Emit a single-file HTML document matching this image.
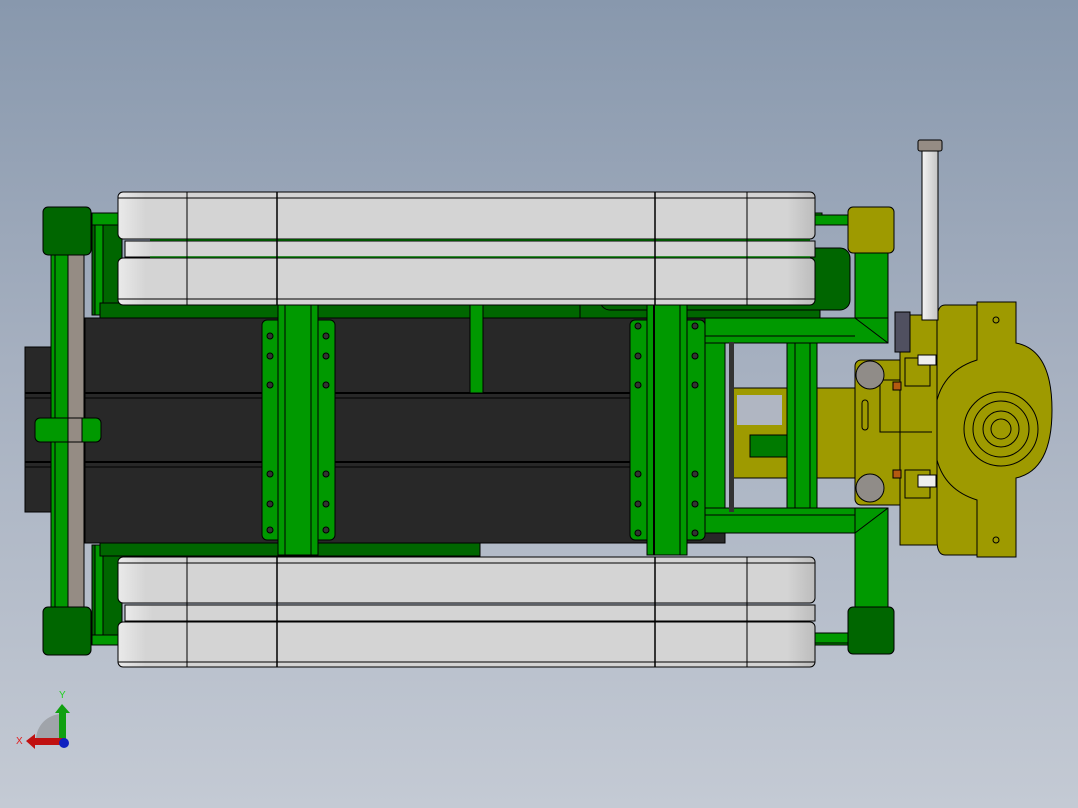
<!DOCTYPE html>
<html><head><meta charset="utf-8"><style>
html,body{margin:0;padding:0;width:1078px;height:808px;overflow:hidden}
body{background:linear-gradient(#8898ad 0%,#a6b0c0 45%,#c4cad4 100%)}
svg{position:absolute;left:0;top:0}
</style></head><body>
<svg width="1078" height="808" viewBox="0 0 1078 808" xmlns="http://www.w3.org/2000/svg" stroke="#000" stroke-width="1">
<defs>
<linearGradient id="rl" x1="0" x2="1"><stop offset="0" stop-color="#eaeaea"/><stop offset="0.04" stop-color="#d4d4d4"/><stop offset="0.96" stop-color="#d4d4d4"/><stop offset="1" stop-color="#bcbcbc"/></linearGradient>
<linearGradient id="rod" x1="0" x2="1"><stop offset="0" stop-color="#f4f4f4"/><stop offset="1" stop-color="#c4c4c4"/></linearGradient>
</defs>
<!-- frame behind rollers -->
<rect x="92" y="213" width="730" height="12" fill="#009900"/>
<rect x="92" y="633" width="760" height="12" fill="#009900"/>
<rect x="92" y="225" width="30" height="90" fill="#006600"/>
<rect x="92" y="545" width="30" height="90" fill="#006600"/>
<rect x="95" y="225" width="8" height="90" fill="#009900"/>
<rect x="95" y="545" width="8" height="90" fill="#009900"/>
<rect x="100" y="303" width="720" height="15" fill="#006600"/>
<rect x="100" y="541" width="380" height="15" fill="#006600"/>
<rect x="600" y="248" width="250" height="62" rx="10" fill="#006600"/>
<rect x="480" y="300" width="100" height="20" fill="#006600"/>
<!-- black conveyor -->
<rect x="25" y="347" width="65" height="165" fill="#282828"/>
<rect x="85" y="318" width="640" height="225" fill="#282828"/>
<line x1="25" y1="393" x2="725" y2="393" stroke-width="2"/>
<line x1="25" y1="398" x2="725" y2="398"/>
<line x1="25" y1="462" x2="725" y2="462" stroke-width="2"/>
<line x1="25" y1="467" x2="725" y2="467"/>
<rect x="470" y="303" width="13" height="90" fill="#009900"/>
<!-- left vertical bar -->
<rect x="51" y="255" width="17" height="355" fill="#009900"/>
<line x1="55" y1="255" x2="55" y2="610"/>
<rect x="68" y="255" width="16" height="355" fill="#958c84"/>
<rect x="35" y="418" width="66" height="24" rx="5" fill="#009900"/>
<rect x="68" y="418" width="14" height="24" fill="#958c84"/>
<rect x="43" y="207" width="48" height="48" rx="5" fill="#006600"/>
<rect x="43" y="607" width="48" height="48" rx="5" fill="#006600"/>
<!-- green plates -->
<g fill="#009900">
<rect x="262" y="320" width="73" height="220" rx="5"/>
<rect x="278" y="305" width="40" height="250"/>
<rect x="630" y="320" width="75" height="220" rx="5"/>
<rect x="647" y="305" width="40" height="250"/>
</g>
<line x1="285" y1="305" x2="285" y2="555"/><line x1="311" y1="305" x2="311" y2="555"/>
<line x1="654" y1="305" x2="654" y2="555" stroke-width="2"/><line x1="680" y1="305" x2="680" y2="555"/>
<g fill="#333">
<circle cx="270" cy="336" r="3"/><circle cx="270" cy="356" r="3"/><circle cx="270" cy="385" r="3"/><circle cx="270" cy="474" r="3"/><circle cx="270" cy="504" r="3"/><circle cx="270" cy="530" r="3"/>
<circle cx="326" cy="336" r="3"/><circle cx="326" cy="356" r="3"/><circle cx="326" cy="385" r="3"/><circle cx="326" cy="474" r="3"/><circle cx="326" cy="504" r="3"/><circle cx="326" cy="530" r="3"/>
<circle cx="638" cy="326" r="3"/><circle cx="638" cy="356" r="3"/><circle cx="638" cy="385" r="3"/><circle cx="638" cy="474" r="3"/><circle cx="638" cy="504" r="3"/><circle cx="638" cy="533" r="3"/>
<circle cx="695" cy="326" r="3"/><circle cx="695" cy="356" r="3"/><circle cx="695" cy="385" r="3"/><circle cx="695" cy="474" r="3"/><circle cx="695" cy="504" r="3"/><circle cx="695" cy="533" r="3"/>
</g>
<!-- right frame -->
<g fill="#009900">
<rect x="855" y="253" width="33" height="90"/>
<rect x="705" y="318" width="183" height="25"/>
<rect x="705" y="508" width="183" height="25"/>
<rect x="855" y="508" width="33" height="100"/>
<rect x="787" y="343" width="30" height="165"/>
<rect x="705" y="343" width="20" height="165"/>
<rect x="815" y="215" width="35" height="10"/>
<rect x="815" y="633" width="35" height="10"/>
</g>
<line x1="795" y1="343" x2="795" y2="508"/><line x1="810" y1="343" x2="810" y2="508"/>
<line x1="705" y1="336" x2="855" y2="336"/><line x1="705" y1="515" x2="855" y2="515"/>
<line x1="855" y1="318" x2="888" y2="343" fill="none"/><line x1="855" y1="533" x2="888" y2="508" fill="none"/>
<rect x="848" y="207" width="46" height="46" rx="5" fill="#9e9a00"/>
<rect x="848" y="607" width="46" height="47" rx="5" fill="#006600"/>
<!-- rollers -->
<g fill="url(#rl)">
<rect x="118" y="192" width="697" height="47" rx="5"/>
<rect x="125" y="241" width="690" height="16"/>
<rect x="118" y="258" width="697" height="47" rx="5"/>
<rect x="118" y="557" width="697" height="46" rx="5"/>
<rect x="125" y="605" width="690" height="16"/>
<rect x="118" y="622" width="697" height="45" rx="5"/>
</g>
<g>
<line x1="118" y1="198" x2="815" y2="198"/><line x1="118" y1="299" x2="815" y2="299"/>
<line x1="118" y1="563" x2="815" y2="563"/><line x1="118" y1="662" x2="815" y2="662"/>
<line x1="150" y1="240" x2="810" y2="240" stroke="#007000" stroke-width="1.5"/>
<line x1="150" y1="257" x2="810" y2="257" stroke="#007000" stroke-width="1.5"/>
<line x1="187" y1="192" x2="187" y2="305"/><line x1="277" y1="192" x2="277" y2="305" stroke-width="1.5"/><line x1="655" y1="192" x2="655" y2="305" stroke-width="1.5"/><line x1="747" y1="192" x2="747" y2="305"/>
<line x1="187" y1="557" x2="187" y2="667"/><line x1="277" y1="557" x2="277" y2="667" stroke-width="1.5"/><line x1="655" y1="557" x2="655" y2="667" stroke-width="1.5"/><line x1="747" y1="557" x2="747" y2="667"/>
</g>
<!-- yellow mechanism -->
<g fill="#9e9a00">
<rect x="732" y="388" width="55" height="90"/>
<rect x="817" y="388" width="40" height="90"/>
<rect x="855" y="360" width="80" height="145" rx="6"/>
<rect x="880" y="380" width="52" height="52"/>
<rect x="900" y="315" width="40" height="230"/>
<path d="M945 305 L977 305 L977 302 L1016 302 L1016 343 Q1052 350 1052 410 Q1052 470 1016 478 L1016 557 L977 557 L977 555 L945 555 Q937 555 937 540 L937 320 Q937 305 945 305Z"/>
<rect x="905" y="358" width="25" height="28"/>
<rect x="905" y="470" width="25" height="28"/>
</g>
<rect x="737" y="395" width="45" height="30" fill="#b0b6c2" stroke="none"/>
<rect x="750" y="435" width="37" height="22" fill="#007a00"/>
<rect x="729" y="342" width="5" height="170" fill="#333" stroke="none"/>
<line x1="880" y1="432" x2="932" y2="432"/>
<path d="M977 305 L977 360 Q945 370 937 400" fill="none"/>
<path d="M977 555 L977 500 Q945 490 937 460" fill="none"/>
<circle cx="1001" cy="429" r="37" fill="#9e9a00"/>
<circle cx="1001" cy="429" r="28" fill="none"/>
<circle cx="1001" cy="429" r="18" fill="none"/>
<circle cx="1001" cy="429" r="10" fill="none"/>
<circle cx="996" cy="320" r="3" fill="none"/><circle cx="996" cy="540" r="3" fill="none"/>
<rect x="862" y="400" width="6" height="30" rx="3" fill="none"/>
<circle cx="870" cy="375" r="14" fill="#908c88"/>
<circle cx="870" cy="488" r="14" fill="#908c88"/>
<rect x="895" y="312" width="15" height="40" fill="#505060"/>
<rect x="918" y="355" width="18" height="10" fill="#eee"/>
<rect x="918" y="475" width="18" height="12" fill="#eee"/>
<rect x="893" y="382" width="8" height="8" fill="#b55a10"/>
<rect x="893" y="470" width="8" height="8" fill="#b55a10"/>
<!-- cylinder rod -->
<rect x="922" y="150" width="16" height="170" fill="url(#rod)"/>
<rect x="918" y="140" width="24" height="11" rx="2" fill="#958c84"/>
<!-- axis triad -->
<path d="M36 740 A26 26 0 0 1 62 714 L62 740 Z" fill="#a0a4aa" stroke="none"/>
<rect x="59" y="712" width="7" height="30" fill="#10a010" stroke="none"/>
<path d="M55 713 L62 704 L70 713Z" fill="#10a010" stroke="none"/>
<rect x="34" y="738" width="30" height="7" fill="#c01010" stroke="none"/>
<path d="M35 734 L26 741 L35 749Z" fill="#c01010" stroke="none"/>
<circle cx="64" cy="743" r="5" fill="#1020c0" stroke="none"/>
<text x="59" y="698" font-family="Liberation Sans, sans-serif" font-size="10" fill="#20d020" stroke="none">Y</text>
<text x="16" y="744" font-family="Liberation Sans, sans-serif" font-size="10" fill="#e02020" stroke="none">X</text>
</svg>
</body></html>
